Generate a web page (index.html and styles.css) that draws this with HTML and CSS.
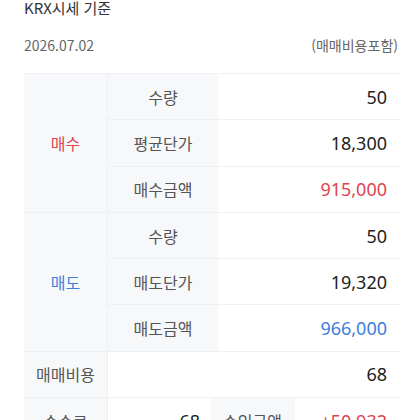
FILE: index.html
```html
<!DOCTYPE html>
<html lang="ko">
<head>
<meta charset="utf-8">
<link rel="stylesheet" href="styles.css">
</head>
<body>
<div class="page">
  <div class="title">KRX시세 기준</div>
  <div class="meta">
    <span class="date">2026.07.02</span>
    <span class="note">(매매비용포함)</span>
  </div>
  <div class="table">
    <div class="cell group buy r3">매수</div>
    <div class="cell label wide">수량</div>
    <div class="cell value rest">50</div>
    <div class="cell label wide">평균단가</div>
    <div class="cell value rest">18,300</div>
    <div class="cell label wide">매수금액</div>
    <div class="cell value rest red">915,000</div>

    <div class="cell group sell r3">매도</div>
    <div class="cell label wide">수량</div>
    <div class="cell value rest">50</div>
    <div class="cell label wide">매도단가</div>
    <div class="cell value rest">19,320</div>
    <div class="cell label wide">매도금액</div>
    <div class="cell value rest blue">966,000</div>

    <div class="cell label first">매매비용</div>
    <div class="cell value all">68</div>

    <div class="cell label first">수수료</div>
    <div class="cell value fee">68</div>
    <div class="cell label income">수입금액</div>
    <div class="cell value red">+50,932</div>
  </div>
</div>
</body>
</html>
```

FILE: styles.css
```css
html, body {
  margin: 0;
  padding: 0;
  background: #ffffff;
}
body {
  font-family: "Noto Sans CJK KR", "Noto Sans", sans-serif;
  color: #222;
}
.page {
  padding: 0 20px 0 24px;
}
.title {
  font-size: 15px;
  line-height: 16px;
  color: #333;
}
.meta {
  display: flex;
  justify-content: space-between;
  align-items: center;
  margin-top: 20px;
  height: 18px;
  font-size: 14px;
  color: #666;
}
.note {
  margin-right: 2px;
}
.table {
  margin-top: 19px;
  display: grid;
  grid-template-columns: 84px 102px 8px 77px 105px;
  grid-auto-rows: 46.3px;
  border-top: 1px solid #eef0f3;
}
.cell {
  display: flex;
  align-items: center;
  font-size: 16px;
  border-bottom: 1px solid #eef0f3;
  box-sizing: border-box;
  white-space: nowrap;
}
.group {
  justify-content: center;
  background: #f7f8fa;
  border-right: 1px solid #eceef1;
  grid-column: 1;
}
.r3 {
  grid-row: span 3;
}
.label {
  justify-content: center;
  background: #f7f8fa;
  color: #555;
}
.label.wide {
  grid-column: 2 / 4;
}
.label.first {
  border-right: 1px solid #eceef1;
}
.value {
  justify-content: flex-end;
  padding-right: 13px;
  color: #222;
  background: #fff;
  font-family: "Noto Sans", "Noto Sans CJK KR", sans-serif;
  font-size: 18px;
}
.value.rest {
  grid-column: 4 / 6;
}
.value.all {
  grid-column: 2 / 6;
}
.value.fee {
  grid-column: 2 / 3;
  padding-right: 10px;
}
.label.income {
  grid-column: 3 / 5;
}
.buy {
  color: #e0434f;
}
.sell {
  color: #3d7fdc;
}
.value.red {
  color: #e0434f;
}
.value.blue {
  color: #3d7fdc;
}
```
